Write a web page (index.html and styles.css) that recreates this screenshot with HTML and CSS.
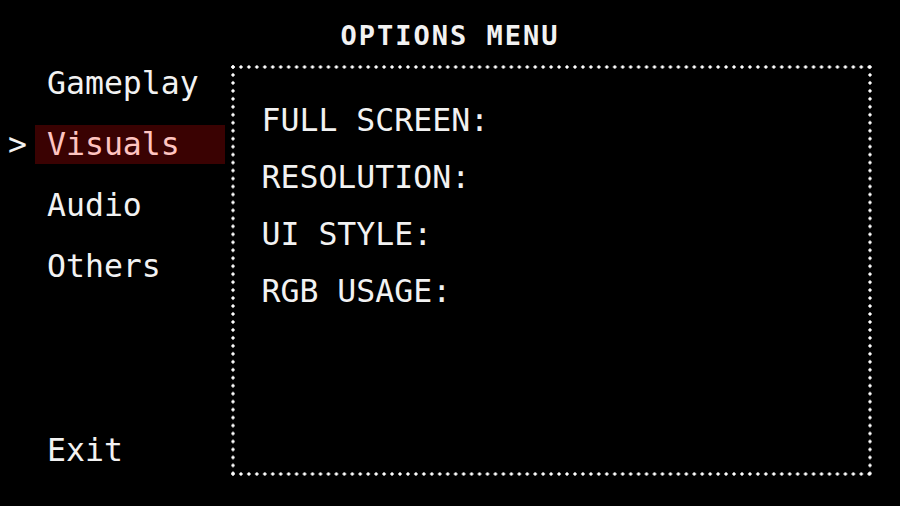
FILE: index.html
```html
<!DOCTYPE html>
<html lang="en">
<head>
    <title>Options Menu</title>
    <link rel="stylesheet" href="styles.css">
</head>
<body>
    <div class="screen">
        <h1 class="title">OPTIONS MENU</h1>
        <div class="main">
            <ul class="menu">
                <li class="menu-row"><span class="cursor"></span><span class="menu-item">Gameplay</span></li>
                <li class="menu-row"><span class="cursor">&gt;</span><span class="menu-item active">Visuals</span></li>
                <li class="menu-row"><span class="cursor"></span><span class="menu-item">Audio</span></li>
                <li class="menu-row"><span class="cursor"></span><span class="menu-item">Others</span></li>
                <li class="menu-row exit"><span class="cursor"></span><span class="menu-item">Exit</span></li>
            </ul>
            <div class="panel">
                <p class="option">FULL SCREEN:</p>
                <p class="option">RESOLUTION:</p>
                <p class="option">UI STYLE:</p>
                <p class="option">RGB USAGE:</p>
            </div>
        </div>
    </div>
</body>
</html>
```

FILE: styles.css
```css
body {
    margin: 0;
    background-color: #000;
    color: #f2f2f2;
    font-family: 'DejaVu Sans Mono', monospace;
}

.screen {
    width: 900px;
    height: 506px;
    display: flex;
    flex-direction: column;
}

.title {
    margin: 0;
    padding-top: 8px;
    height: 55px;
    line-height: 55px;
    font-size: 27px;
    font-weight: bold;
    letter-spacing: 2px;
    text-align: center;
}

.main {
    display: flex;
    align-items: flex-start;
}

.menu {
    list-style: none;
    margin: 0;
    padding: 1px 0 7px 0;
    width: 228px;
    height: 406px;
    display: flex;
    flex-direction: column;
    gap: 22px;
}

.menu-row {
    display: flex;
    font-size: 31.5px;
    line-height: 39px;
}

.menu-row.exit {
    margin-top: auto;
}

.cursor {
    width: 35px;
    padding-left: 8px;
    box-sizing: border-box;
}

.menu-item {
    width: 190px;
    padding-left: 12px;
    box-sizing: border-box;
}

.menu-item.active {
    background-color: #3a0202;
    color: #ffc4c0;
}

.panel {
    width: 645px;
    height: 415px;
    box-sizing: border-box;
    padding: 29px 0 0 33px;
    margin-left: 0.5px;
    background-image:
        radial-gradient(circle, #fff 1.3px, transparent 2px),
        radial-gradient(circle, #fff 1.3px, transparent 2px),
        radial-gradient(circle, #fff 1.3px, transparent 2px),
        radial-gradient(circle, #fff 1.3px, transparent 2px);
    background-size: 8px 8px;
    background-position: left top, left bottom, left top, right top;
    background-repeat: round no-repeat, round no-repeat, no-repeat round, no-repeat round;
}

.option {
    margin: 0;
    font-size: 31.5px;
    line-height: 57px;
}
```
